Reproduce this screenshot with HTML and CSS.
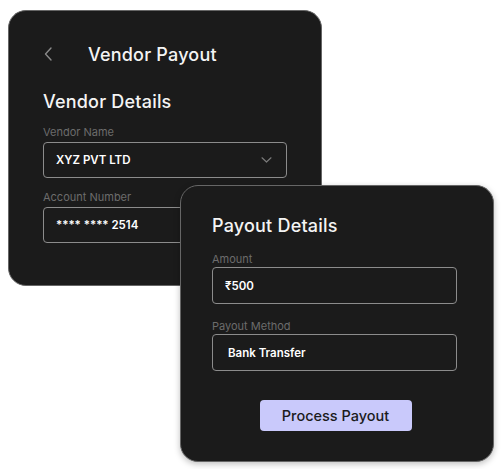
FILE: index.html
```html
<!doctype html>
<html lang="en">
  <head>
    <meta charset="UTF-8" />
    <meta name="viewport" content="width=device-width, initial-scale=1.0" />
    <title>Vendor Payout</title>
    <link rel="stylesheet" href="styles.css">
  </head>
  <body>
    <div class="stage">
      <!-- Vendor card (back) -->
      <section class="card card-vendor">
        <header class="card-head">
          <span class="back">
            <svg width="9" height="14" viewBox="0 0 9 14" fill="none">
              <path d="M7 1 L1.5 7 L7 13" stroke="#8a8a8a" stroke-width="1.4" stroke-linecap="round" stroke-linejoin="round" />
            </svg>
          </span>
          <h1>Vendor Payout</h1>
        </header>
        <h2 class="section-title">Vendor Details</h2>
        <label class="field-label">Vendor Name</label>
        <div class="field field-select">
          <span>XYZ PVT LTD</span>
          <svg width="11" height="6" viewBox="0 0 11 6" fill="none">
            <path d="M1 0.8 L5.5 5 L10 0.8" stroke="#7a7a7a" stroke-width="1.2" stroke-linecap="round" stroke-linejoin="round" />
          </svg>
        </div>
        <label class="field-label gap">Account Number</label>
        <div class="field">**** **** 2514</div>
      </section>

      <!-- Payout card (front) -->
      <section class="card card-payout">
        <h2 class="section-title">Payout Details</h2>
        <label class="field-label">Amount</label>
        <div class="field field-tall">₹500</div>
        <label class="field-label gap">Payout Method</label>
        <div class="field field-tall field-wide">Bank Transfer</div>
        <div class="actions">
          <button class="btn">Process Payout</button>
        </div>
      </section>
    </div>
  </body>
</html>
```

FILE: styles.css
```css
:root {
  --card-bg: #1b1b1b;
  --card-border: #666;
  --field-border: #8c8c8c;
  --label-color: #6c6c6c;
  --text-color: #f4f4f4;
  --btn-bg: #c9c9fb;
  --btn-text: #1b1b1b;
}

* {
  margin: 0;
  padding: 0;
  box-sizing: border-box;
}

body {
  font-family: 'Inter', 'Noto Sans', sans-serif;
  background-color: #fff;
  color: var(--text-color);
  width: 501px;
  height: 469px;
  overflow: hidden;
}

.stage {
  display: grid;
}

.card {
  grid-area: 1 / 1;
  width: 314px;
  background-color: var(--card-bg);
  border: 1.5px solid var(--card-border);
  border-radius: 18px;
  display: flex;
  flex-direction: column;
}

.card-vendor {
  margin: 10px 0 0 8px;
  height: 276px;
  padding: 28px 34px 0 34px;
}

.card-payout {
  margin: 185px 0 0 180px;
  height: 277px;
  padding: 28px 36px 0 31px;
  box-shadow: 0 2px 6px rgba(0, 0, 0, 0.25);
}

.card-head {
  display: flex;
  align-items: center;
  height: 30px;
  margin-bottom: 21px;
}

.back {
  display: flex;
  width: 45px;
  padding-left: 1px;
}

h1 {
  font-size: 18px;
  font-weight: 500;
  letter-spacing: 0.2px;
}

.section-title {
  font-size: 18px;
  font-weight: 500;
  line-height: 24px;
  letter-spacing: 0.2px;
  margin-bottom: 10px;
}

.card-payout .section-title {
  margin-bottom: 13px;
}

.field-label {
  display: block;
  font-size: 11px;
  line-height: 16px;
  color: var(--label-color);
  margin-bottom: 2px;
}

.card-payout .field-label {
  margin-bottom: 0;
}

.field-label.gap {
  margin-top: 11px;
}

.card-payout .field-label.gap {
  margin-top: 14px;
}

.field {
  height: 36px;
  border: 1px solid var(--field-border);
  border-radius: 4px;
  display: flex;
  align-items: center;
  padding: 0 12px;
  font-size: 11.5px;
  font-weight: 600;
  color: #fff;
}

.field-tall {
  height: 37px;
}

.field-wide {
  padding-left: 15px;
}

.field-select {
  justify-content: space-between;
  padding-right: 14px;
}

.actions {
  display: flex;
  justify-content: center;
  margin-top: 29px;
  padding-left: 2px;
}

.btn {
  width: 152px;
  height: 31px;
  border: none;
  border-radius: 4px;
  background-color: var(--btn-bg);
  color: var(--btn-text);
  font-family: inherit;
  font-size: 14.5px;
  font-weight: 500;
}
```
